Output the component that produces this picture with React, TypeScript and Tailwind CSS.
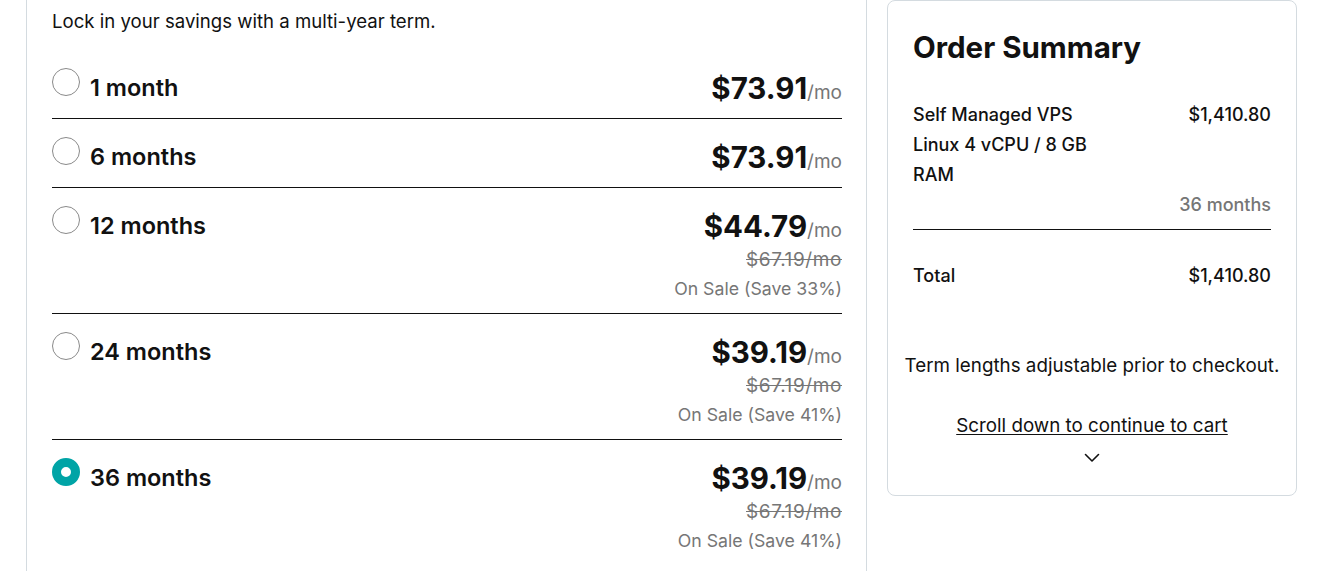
import React from 'react';

type Term = {
  label: string;
  price: string;
  was?: string;
  save?: string;
  selected?: boolean;
};

const terms: Term[] = [
  { label: '1 month', price: '$73.91' },
  { label: '6 months', price: '$73.91' },
  { label: '12 months', price: '$44.79', was: '$67.19/mo', save: 'On Sale (Save 33%)' },
  { label: '24 months', price: '$39.19', was: '$67.19/mo', save: 'On Sale (Save 41%)' },
  { label: '36 months', price: '$39.19', was: '$67.19/mo', save: 'On Sale (Save 41%)', selected: true },
];

const Radio: React.FC<{ checked?: boolean }> = ({ checked }) =>
  checked ? (
    <span className="block w-[28px] h-[28px] shrink-0 rounded-full border-[9px] border-[#00a4a6] bg-white" />
  ) : (
    <span className="block w-[28px] h-[28px] shrink-0 rounded-full border border-[#8a8a8a] bg-white" />
  );

const TermRow: React.FC<{ term: Term; last: boolean }> = ({ term, last }) => (
  <div
    className={`flex items-start justify-between pt-[18px] pb-[10px] ${
      last ? '' : 'border-b border-[#111111]'
    }`}
  >
    <label className="flex items-start gap-[10px] cursor-pointer">
      <Radio checked={term.selected} />
      <span className="text-[23.5px] leading-[40px] font-semibold text-[#111111]">{term.label}</span>
    </label>
    <div className="flex flex-col items-end">
      <div className="flex items-baseline h-[40px] whitespace-nowrap">
        <span className="text-[29.5px] leading-[40px] font-bold text-[#111111]">{term.price}</span>
        <span className="text-[19px] leading-none text-[#767676]">/mo</span>
      </div>
      {term.was && (
        <span className="text-[19px] leading-[28px] tracking-[0.6px] text-[#767676] line-through">
          {term.was}
        </span>
      )}
      {term.save && (
        <span className="text-[17.7px] leading-[29px] text-[#767676]">{term.save}</span>
      )}
    </div>
  </div>
);

export default function App() {
  return (
    <div
      className="flex items-start gap-[20px] w-[1343px] h-[571px] overflow-hidden bg-white pl-[26px]"
      style={{ fontFamily: 'Inter, "Noto Sans", sans-serif' }}
    >
      {/* term selector card, top scrolled off */}
      <section className="w-[841px] h-[571px] shrink-0 border-x border-[#d4dbe0] pl-[25px] pr-[24px]">
        <p className="mt-[9px] text-[18.6px] leading-[24px] text-[#111111]">
          Lock in your savings with a multi-year term.
        </p>
        <div className="mt-[17px]">
          {terms.map((t, i) => (
            <TermRow key={t.label} term={t} last={i === terms.length - 1} />
          ))}
        </div>
      </section>

      {/* order summary */}
      <aside className="w-[410px] shrink-0 border border-[#d4dbe0] rounded-lg text-[#111111]">
        <div className="px-[25px] pt-[28px]">
          <h2 className="text-[29.5px] leading-[36px] font-bold">Order Summary</h2>
          <div className="mt-[35px] flex justify-between text-[18px] leading-[30px] font-medium">
            <span>
              Self Managed VPS
              <br />
              Linux 4 vCPU / 8 GB
              <br />
              RAM
            </span>
            <span>$1,410.80</span>
          </div>
          <div className="text-right text-[18px] leading-[30px] font-medium text-[#767676]">36 months</div>
          <div className="mt-[9px] border-b border-[#111111]" />
          <div className="mt-[31px] flex justify-between text-[18px] leading-[30px] font-medium">
            <span>Total</span>
            <span>$1,410.80</span>
          </div>
        </div>
        <div className="px-[10px] pt-[60px] pb-[32px] flex flex-col items-center text-[18.8px]">
          <p className="leading-[30px] whitespace-nowrap">Term lengths adjustable prior to checkout.</p>
          <a href="#" className="mt-[30px] leading-[30px] underline underline-offset-2 text-[#111111]">
            Scroll down to continue to cart
          </a>
          <svg className="mt-[12px]" width="16" height="10" viewBox="0 0 16 10" fill="none">
            <path d="M1.5 1.5 L8 8 L14.5 1.5" stroke="#111111" strokeWidth="1.6" strokeLinecap="round" strokeLinejoin="round" />
          </svg>
        </div>
      </aside>
    </div>
  );
}
